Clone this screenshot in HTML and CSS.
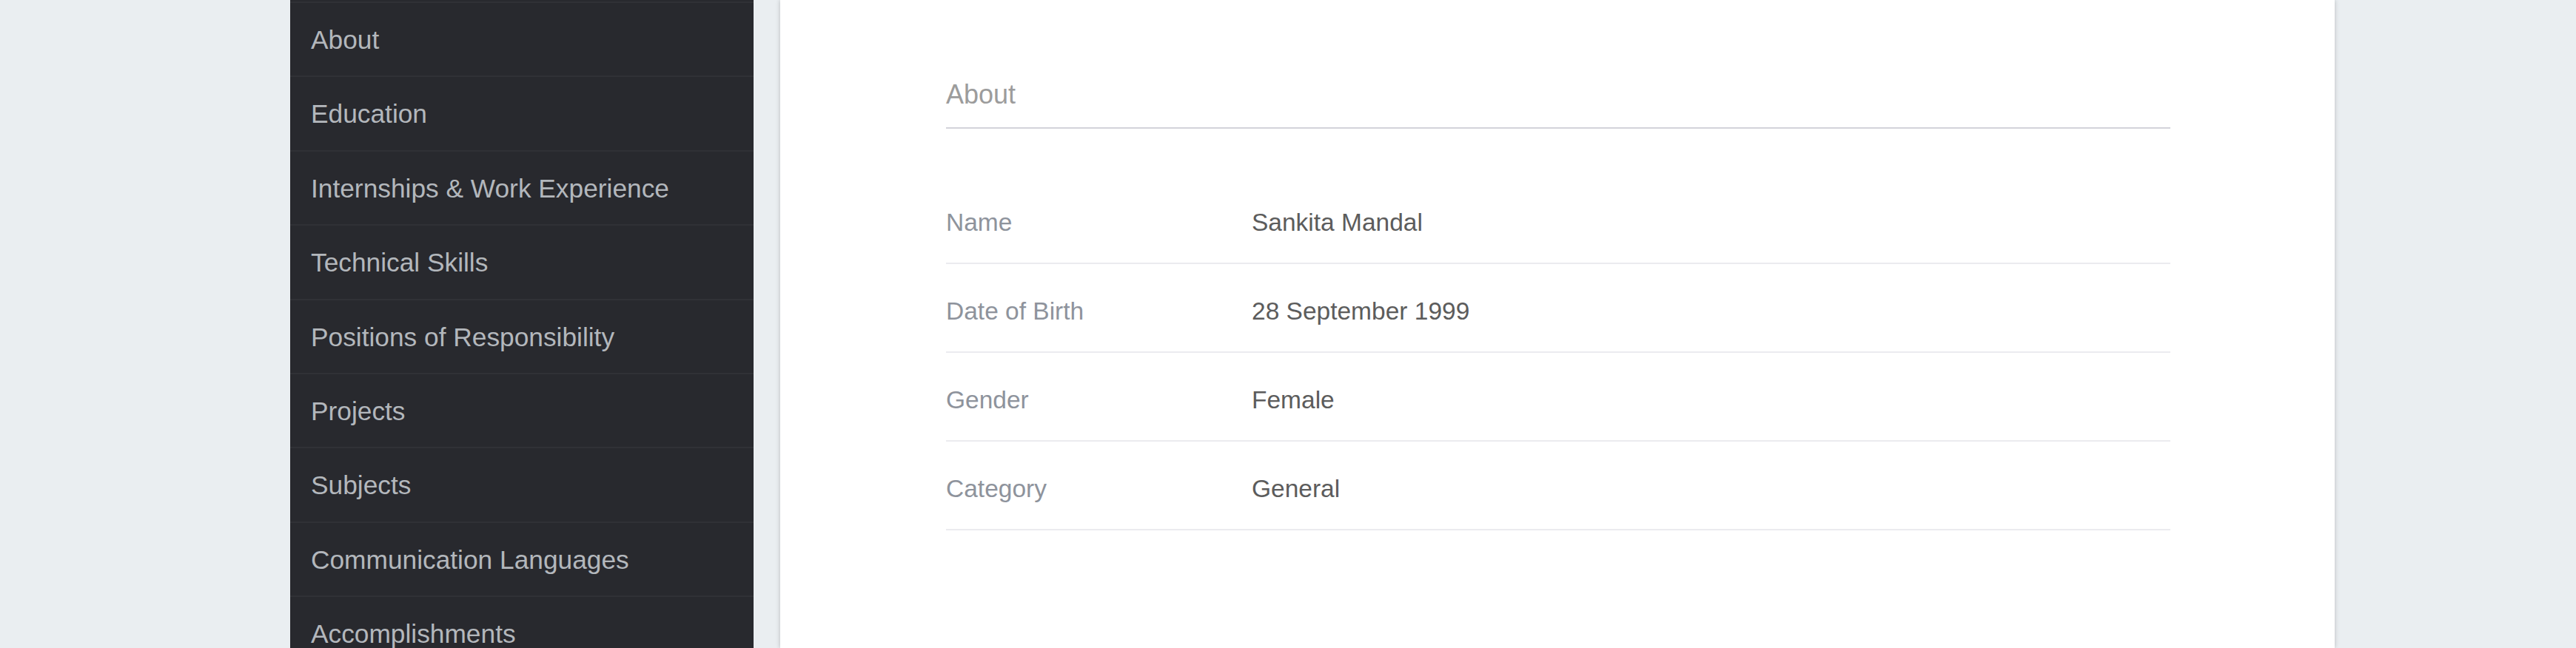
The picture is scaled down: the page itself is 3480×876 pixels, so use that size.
FILE: index.html
```html
<!DOCTYPE html>
<html>
<head>
<meta charset="utf-8">
<link rel="stylesheet" href="styles.css">
</head>
<body>
<div class="page">
  <nav class="sidebar">
    <div class="nav-item">About</div>
    <div class="nav-item">Education</div>
    <div class="nav-item">Internships &amp; Work Experience</div>
    <div class="nav-item">Technical Skills</div>
    <div class="nav-item">Positions of Responsibility</div>
    <div class="nav-item">Projects</div>
    <div class="nav-item">Subjects</div>
    <div class="nav-item">Communication Languages</div>
    <div class="nav-item">Accomplishments</div>
  </nav>
  <main class="card">
    <h2 class="section-title">About</h2>
    <div class="rows">
      <div class="row"><div class="label">Name</div><div class="value">Sankita Mandal</div></div>
      <div class="row"><div class="label">Date of Birth</div><div class="value">28 September 1999</div></div>
      <div class="row"><div class="label">Gender</div><div class="value">Female</div></div>
      <div class="row"><div class="label">Category</div><div class="value">General</div></div>
    </div>
  </main>
</div>
</body>
</html>
```

FILE: styles.css
```css
html, body {
  margin: 0;
  padding: 0;
  background: #eaeef1;
  font-family: "Liberation Sans", Arial, sans-serif;
  overflow: hidden;
}
.page {
  display: flex;
  align-items: stretch;
  gap: 36px;
  padding-left: 392px;
  height: 876px;
  overflow: hidden;
}
.sidebar {
  width: 626px;
  flex: none;
  background: #28292e;
  padding-top: 2px;
  display: flex;
  flex-direction: column;
}
.nav-item {
  flex: none;
  box-sizing: border-box;
  height: 100.4px;
  border-top: 2px solid #303136;
  padding: 30px 0 0 28px;
  font-size: 35.3px;
  line-height: 40px;
  color: #b3b7bc;
  white-space: nowrap;
}
.card {
  width: 2100px;
  flex: none;
  box-sizing: border-box;
  background: #ffffff;
  box-shadow: 0 0 6px rgba(0, 0, 0, 0.22);
  padding: 107px 222px 0 224px;
}
.section-title {
  margin: 0;
  font-size: 36px;
  line-height: 42px;
  font-weight: normal;
  color: #9c9c9c;
  padding-bottom: 23px;
  border-bottom: 2px solid #d3d3da;
}
.rows {
  margin-top: 63px;
}
.row {
  display: flex;
  padding: 44px 0 34px;
  border-bottom: 2px solid #ebebef;
  font-size: 33.5px;
  line-height: 40px;
}
.label {
  width: 413px;
  flex: none;
  color: #8e939c;
}
.value {
  color: #5c5c5c;
}
```
